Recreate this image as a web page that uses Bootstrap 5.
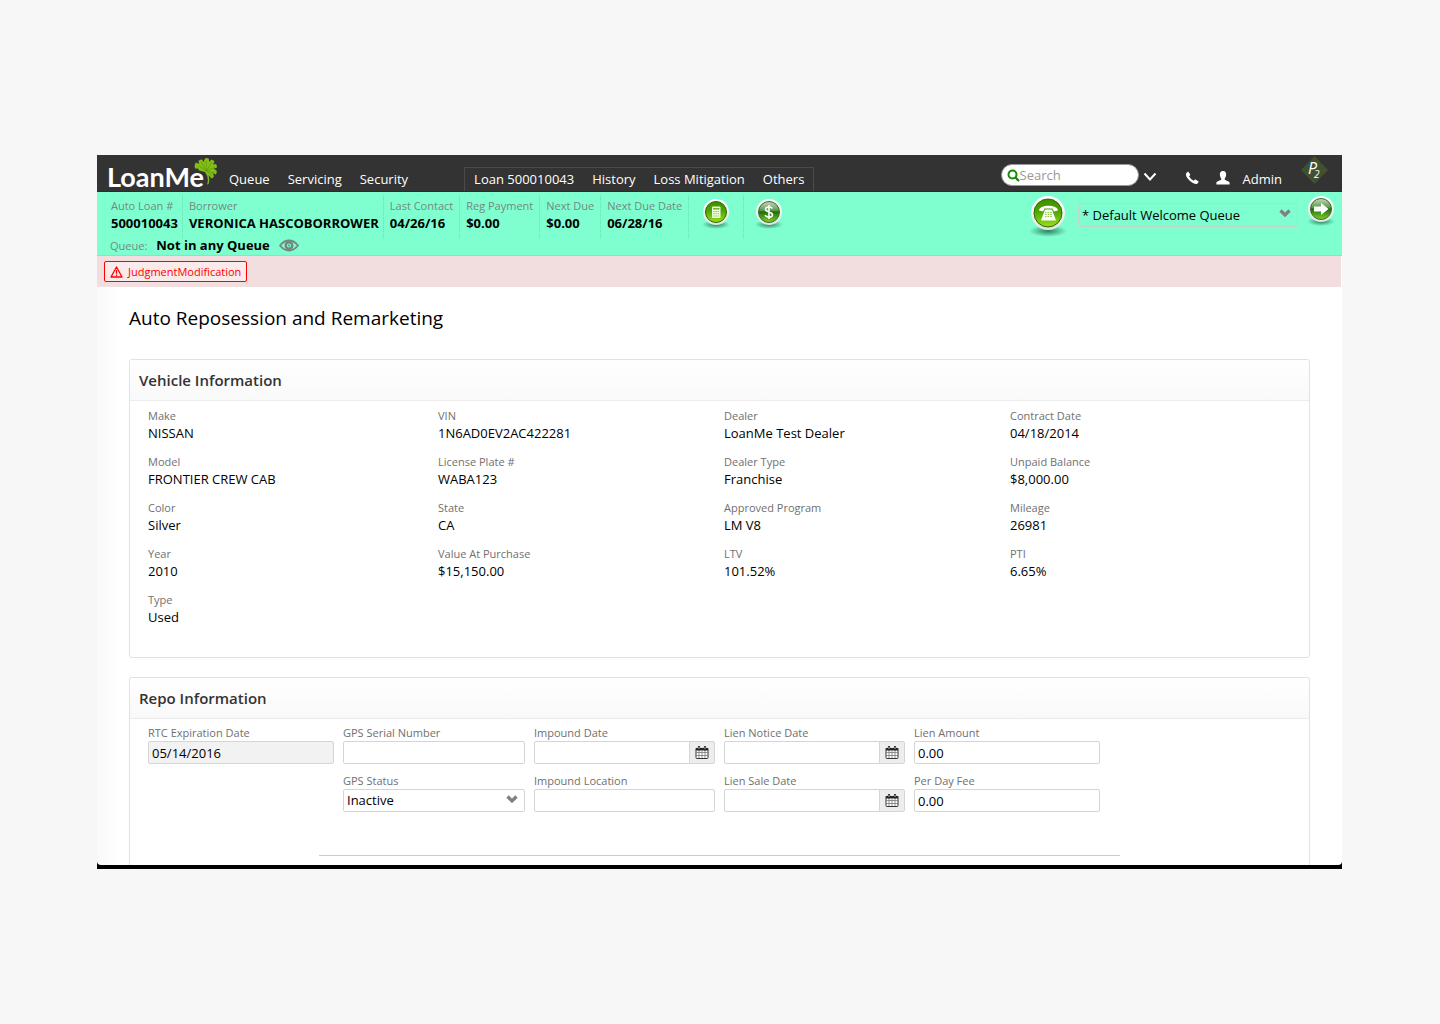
<!DOCTYPE html>
<html lang="en">
<head>
<meta charset="utf-8">
<meta name="viewport" content="width=device-width, initial-scale=1">
<title>Auto Reposession and Remarketing</title>
<link href="https://cdn.jsdelivr.net/npm/bootstrap@5.3.0/dist/css/bootstrap.min.css" rel="stylesheet">
<style>
body{background:#f7f7f7;font-family:"Open Sans",sans-serif;font-size:13px;line-height:17px;color:#000}
svg{display:block;flex-shrink:0}
.stage{padding:155px 98px 155px 97px}
.topbar{background:#333;min-height:37px;padding-left:10px;padding-right:14px;border-bottom:1px solid #2b2b2b}
.topbar a{color:#fff;text-decoration:none}
.wordmark{font-family:Lato,sans-serif;font-size:27px;font-weight:700;line-height:28px;color:#fff}
.leaf{margin-left:-10px;margin-top:3px}
.main-links{gap:18px;margin-left:11px;padding-bottom:3px}
.loan-links{gap:18px;margin-left:56px;padding:3px 9px 3px;border:1px solid #4a4a4a;border-bottom:0;height:24px}
.search-pill{background:#fff;border:1px solid #999;border-radius:11px;width:138px;height:22px;padding-left:5px;margin-top:9px}
.search-pill input{border:0;outline:0;background:none;min-width:0;padding:0;line-height:18px}
.search-pill input::placeholder{color:#999;opacity:1}
.account{margin-left:15px}
.bare{border:0;background:none;padding:0}
.summary{background:#7fffd0;min-height:64px;padding:3px 6px 0 10px;border-bottom:1px solid #74efc2}
.summary dl{margin:0}
.fact{border-right:1px dotted #6cdcb2;padding:3px 6px 0;min-height:43px;white-space:nowrap}
.fact-wide{padding-right:4px}
.fact dt,.soft-label,.field label,.spec dt{font-size:11px;font-weight:400;color:#707070;line-height:15px;display:block}
.fact dt,.spec dt{margin-bottom:2px}
.field label{margin-bottom:1px}
.fact dt,.soft-label{color:#738880}
.fact dd,.spec dd{margin:0}
.fact dd{font-weight:700}
.queue-line{gap:9px;padding-left:3px;margin-top:-1px}
.dial{margin-right:10px}
.notice{background:#f2dede;min-height:31px;padding:5px 7px;margin-right:1px}
.flag{border:1px solid #f00;border-radius:2px;color:#f00;font-size:11px;line-height:19px;padding:0 5px;gap:5px;background:#faeaea}
.flag:hover{color:#c00}
.page{background:linear-gradient(90deg,#fafafa,#fff 24px);padding:19px 32px 0;border-radius:0 0 4px 4px}
.page h1{font-size:19px;line-height:24px;font-weight:400;margin:0 0 29px}
.panel{background:#fff;border:1px solid #e2e2e2;border-radius:3px}
.panel h2{font-size:15px;line-height:20px;font-weight:600;color:#333;margin:0;padding:10px 9px;background:linear-gradient(#fff,#f9f9f9);border-bottom:1px solid #ececec;border-radius:3px 3px 0 0}
.specs{display:grid;grid-template-columns:290fr 286fr 286fr 286fr;row-gap:12px;padding:7px 13px 31px 18px;margin:0}
.panel-open{border-bottom:0;border-radius:3px 3px 0 0;margin-top:19px}
.fields{display:grid;grid-template-columns:195fr 191fr 190fr 190fr 195fr 187fr;row-gap:9px;padding:6px 13px 0 18px}
.field{padding-right:9px}
.box{height:23px;min-height:23px;font-size:13px;line-height:17px;color:#000;border:1px solid #d5d5d5;border-radius:2px;padding:2px 3px}
.box[readonly]{background:#f2f2f2}
select.box{background-image:url("data:image/svg+xml,%3Csvg xmlns='http://www.w3.org/2000/svg' viewBox='0 0 12 8'%3E%3Cpath d='M1.500 1.500L6 6 10.500 1.500' fill='none' stroke='%23808080' stroke-width='3.200'/%3E%3C/svg%3E");background-size:12px 8px;background-position:right 6px top 5px;padding-right:20px}
select.queue-select{width:220px;height:24px;border-color:#c0d6cc;background-color:transparent;margin-top:8px;padding-top:3px}
.cal{height:23px;width:26px;padding:0;border:1px solid #d5d5d5;background:#ededed;border-radius:0 2px 2px 0}
.divider{width:68%;margin:43px auto 0;border:0;border-top:1px solid #ccc;opacity:1}
.tail{height:9px}
.desk{background:#000;padding-bottom:4px}
</style>
<script src="https://cdn.jsdelivr.net/npm/bootstrap@5.3.0/dist/js/bootstrap.bundle.min.js"></script>
</head>
<body>
<svg width="0" height="0" class="position-absolute" aria-hidden="true">
<defs>
<linearGradient id="lime" x1="0" y1="0" x2="0" y2="1"><stop offset="0" stop-color="#3f8f00"/><stop offset=".45" stop-color="#4fa500"/><stop offset="1" stop-color="#9be01a"/></linearGradient>
<linearGradient id="gloss" x1="0" y1="0" x2="0" y2="1"><stop offset="0" stop-color="#c9d8c0"/><stop offset=".42" stop-color="#5c9a4c"/><stop offset=".5" stop-color="#1f6b0c"/><stop offset="1" stop-color="#7fd52a"/></linearGradient>
<linearGradient id="rim" x1="0" y1="0" x2="0" y2="1"><stop offset="0" stop-color="#fff"/><stop offset="1" stop-color="#dfe6e0"/></linearGradient>
<radialGradient id="drop"><stop offset="0" stop-color="#1c6b4c" stop-opacity=".85"/><stop offset="1" stop-color="#1c6b4c" stop-opacity="0"/></radialGradient>
<symbol id="calendar" viewBox="0 0 14 13"><path d="M1 4V11.500q0 1 1 1H12q1 0 1-1V4z" fill="#fff" stroke="#333"/><path d="M.5 4V3q0-1 1-1h11q1 0 1 1v1z" fill="#222"/><path d="M4 4v8M7 4v8M10 4v8M1 6.500h12M1 9.500h12" stroke="#777" stroke-width=".8"/><path d="M4 1.200v2M10 1.200v2" stroke="#222" stroke-width="2.400" stroke-linecap="round"/><path d="M4 1v2M10 1v2" stroke="#ddd" stroke-width=".8"/></symbol>
</defs>
</svg>
<div class="stage">
<div class="desk">
<header>
<nav class="topbar d-flex" aria-label="Main">
<a href="#" class="d-flex align-items-end" aria-label="LoanMe"><span class="wordmark">LoanMe</span>
<svg class="leaf align-self-start" width="24" height="28" viewBox="0 0 24 28"><path d="M13 26.500Q15.500 20 11 14L5 12.500 4 10.500 1 10.500Q0 6.500 2 4.500L5 6 4.500 3Q6 1 8 1.500L9.500 4 11 .5Q13-.5 15 1L15 4 17.500 1.500Q20 2 20.500 4L19 6.500 22 6Q23.500 8 22.500 10L19.500 10.500 22.500 12.500Q23.500 15 21.500 16.500L18.500 15 20 18Q19.500 20 17.500 20.500L14.500 17Q16 22 14.500 26z" fill="#83bd16"/><path d="M12.500 13L5 8M12.500 13L7 4M12.500 13L12 3M12.500 13L18 4M12.500 13L21 9M12.500 13L20.500 15M12.500 13L18 18" stroke="#5c9a10" stroke-width=".7" fill="none"/></svg></a>
<div class="main-links d-flex align-items-end"><a href="#">Queue</a><a href="#">Servicing</a><a href="#">Security</a></div>
<div class="loan-links d-flex align-self-end"><a href="#">Loan 500010043</a><a href="#">History</a><a href="#">Loss Mitigation</a><a href="#">Others</a></div>
<div class="d-flex ms-auto align-items-start">
<div class="search-pill d-flex align-items-center me-1">
<svg width="13" height="13" viewBox="0 0 13 13" fill="none" stroke="#168a00"><circle cx="5.500" cy="5.500" r="4" stroke-width="2"/><path d="M8.500 8.500L12 12" stroke-width="2.300"/></svg>
<input type="search" placeholder="Search" aria-label="Search"></div>
<button class="bare mt-3" aria-label="Search options"><svg width="14" height="12" viewBox="0 0 14 12"><path d="M1.500 2.500L7 8.500 12.500 2.500" fill="none" stroke="#fff" stroke-width="2"/></svg></button>
<a href="#" class="mt-3 ms-4" aria-label="Call"><svg class="ms-1" width="15" height="14" viewBox="0 0 15 14"><path d="M1.200 2.200Q2.500.3 3.400.7L5.200 3.500Q5.400 4 4 5.200 5.500 8 8.700 9.700 10 8.200 10.500 8.500L13.600 10.400Q14 11 12.200 12.700 9.500 13.800 5.600 10.500-.2 5.500 1.200 2.200z" fill="#fff"/></svg></a>
<a href="#" class="account mt-3" aria-label="Account"><svg width="16" height="14" viewBox="0 0 16 14"><path d="M8 0C5.500 0 4.600 1.800 4.900 4 5.100 6 6 7.300 6.400 8 6.500 9.500 2 9.800 1.400 11.500V13.500H14.600V11.500C14 9.800 9.500 9.500 9.600 8 10 7.300 10.900 6 11.100 4 11.400 1.800 10.500 0 8 0z" fill="#fff"/></svg></a>
<a href="#" class="ms-2 ps-1 pt-3">Admin</a>
<svg class="ms-3" width="30" height="30" viewBox="0 0 30 30" role="img" aria-label="P2"><path d="M16.500 1L30 15 16.500 29 3 15z" fill="#3f5130"/><text x="10" y="19" font-family="Open Sans" font-size="16" font-style="italic" fill="#fff">P<tspan dx="-3" dy="4" font-size="10">2</tspan></text></svg>
</div>
</nav>
<section class="summary d-flex" aria-label="Loan summary">
<div>
<dl class="d-flex">
<div class="fact fact-wide ps-1"><dt>Auto Loan #</dt><dd>500010043</dd></div>
<div class="fact fact-wide"><dt>Borrower</dt><dd>VERONICA HASCOBORROWER</dd></div>
<div class="fact"><dt>Last Contact</dt><dd>04/26/16</dd></div>
<div class="fact"><dt>Reg Payment</dt><dd>$0.00</dd></div>
<div class="fact"><dt>Next Due</dt><dd>$0.00</dd></div>
<div class="fact"><dt>Next Due Date</dt><dd>06/28/16</dd></div>
<div class="fact px-2"><button class="bare px-1" aria-label="Calculator"><svg width="30" height="31" viewBox="0 0 30 31"><ellipse cx="15" cy="26.500" rx="14" ry="4.500" fill="url(#drop)"/><circle cx="15" cy="14" r="13" fill="url(#rim)"/><circle cx="15" cy="14" r="10.500" fill="url(#lime)" stroke="#286a00"/><rect x="11" y="8.500" width="8.500" height="11.500" rx="1" fill="#f0ffe0"/><path d="M12 10.800h6.500" stroke="#5ba51b" stroke-width="1.300"/><path d="M12.200 13.500h6M12.200 15.700h6M12.200 18h6" stroke="#8cc45a" stroke-dasharray="1.500 .7"/></svg></button></div>
<div class="fact border-0"><button class="bare px-1" aria-label="Payment"><svg width="30" height="31" viewBox="0 0 30 31"><ellipse cx="15" cy="26.500" rx="14" ry="4.500" fill="url(#drop)"/><circle cx="15" cy="14" r="13" fill="url(#rim)"/><circle cx="15" cy="14" r="10.500" fill="url(#gloss)" stroke="#396c2b"/><path d="M18.500 10.500C17 8.200 11.500 8.500 11.500 11.300 11.500 14.500 18.500 13.300 18.500 16.700 18.500 19.800 12.500 19.800 11 17.200M15 7v14" fill="none" stroke="#fff" stroke-width="1.600"/></svg></button></div>
</dl>
<div class="queue-line d-flex align-items-center"><span class="soft-label">Queue:</span><strong>Not in any Queue</strong>
<button class="bare" aria-label="View queue"><svg width="20" height="13" viewBox="0 0 20 13"><path d="M1 6.500Q5 1.500 10 1.500T19 6.500Q15 11.500 10 11.500T1 6.500z" fill="none" stroke="#738880" stroke-width="1.800"/><circle cx="10" cy="6.500" r="3.300" fill="none" stroke="#738880" stroke-width="2.400"/><circle cx="10" cy="6.500" r="1" fill="#738880"/></svg></button></div>
</div>
<div class="d-flex ms-auto align-items-start">
<button class="bare dial" aria-label="Dial"><svg width="40" height="42" viewBox="0 0 40 42"><ellipse cx="20" cy="36" rx="19" ry="6" fill="url(#drop)"/><circle cx="20" cy="18" r="17" fill="url(#rim)"/><circle cx="20" cy="18" r="14" fill="url(#lime)" stroke="#286a00"/><path d="M11 15.500C11 9 30 9 30 15.500L26 16.500 24.500 13.500H16.500L15 16.500z" fill="#fff"/><path d="M17 14.500H24L28 25.500H13z" fill="#fff"/><path d="M17 17.500h7M17 19.500h7M17 21.500h7" fill="none" stroke="#8fc94a" stroke-dasharray="1.600 1"/></svg></button>
<select class="form-select box queue-select" aria-label="Queue"><option>* Default Welcome Queue</option></select>
<button class="bare ms-2" aria-label="Go"><svg width="30" height="31" viewBox="0 0 30 31"><ellipse cx="15" cy="26.500" rx="14" ry="4.500" fill="url(#drop)"/><circle cx="15" cy="14" r="13" fill="url(#rim)"/><circle cx="15" cy="14" r="10.500" fill="url(#gloss)" stroke="#396c2b"/><path d="M8 11.500h7V8L22.500 14 15 20V16.500H8z" fill="#fff"/></svg></button>
</div>
</section>
<div class="bg-white"><div class="notice d-flex align-items-start"><a href="#" class="flag d-flex align-items-center text-decoration-none"><svg width="13" height="12" viewBox="0 0 13 12" fill="none" stroke="#f00"><path d="M6.500 1L12 11H1z" stroke-width="1.300" stroke-linejoin="round"/><path d="M6.500 4v3.700M6.500 8.500v1.400" stroke-width="1.300"/></svg>JudgmentModification</a></div></div>
</header>
<main class="page">
<h1>Auto Reposession and Remarketing</h1>
<section class="panel">
<h2>Vehicle Information</h2>
<dl class="specs">
<div class="spec"><dt>Make</dt><dd>NISSAN</dd></div><div class="spec"><dt>VIN</dt><dd>1N6AD0EV2AC422281</dd></div><div class="spec"><dt>Dealer</dt><dd>LoanMe Test Dealer</dd></div><div class="spec"><dt>Contract Date</dt><dd>04/18/2014</dd></div>
<div class="spec"><dt>Model</dt><dd>FRONTIER CREW CAB</dd></div><div class="spec"><dt>License Plate #</dt><dd>WABA123</dd></div><div class="spec"><dt>Dealer Type</dt><dd>Franchise</dd></div><div class="spec"><dt>Unpaid Balance</dt><dd>$8,000.00</dd></div>
<div class="spec"><dt>Color</dt><dd>Silver</dd></div><div class="spec"><dt>State</dt><dd>CA</dd></div><div class="spec"><dt>Approved Program</dt><dd>LM V8</dd></div><div class="spec"><dt>Mileage</dt><dd>26981</dd></div>
<div class="spec"><dt>Year</dt><dd>2010</dd></div><div class="spec"><dt>Value At Purchase</dt><dd>$15,150.00</dd></div><div class="spec"><dt>LTV</dt><dd>101.52%</dd></div><div class="spec"><dt>PTI</dt><dd>6.65%</dd></div>
<div class="spec"><dt>Type</dt><dd>Used</dd></div>
</dl>
</section>
<section class="panel panel-open">
<h2>Repo Information</h2>
<form class="fields">
<div class="field"><label for="rtc">RTC Expiration Date</label><input id="rtc" class="form-control box" value="05/14/2016" readonly></div>
<div class="field"><label for="gps">GPS Serial Number</label><input id="gps" class="form-control box"></div>
<div class="field"><label for="imp">Impound Date</label><div class="input-group flex-nowrap"><input id="imp" class="form-control box"><button type="button" class="cal d-flex align-items-center justify-content-center" aria-label="Pick impound date"><svg width="14" height="13"><use href="#calendar"/></svg></button></div></div>
<div class="field"><label for="lnd">Lien Notice Date</label><div class="input-group flex-nowrap"><input id="lnd" class="form-control box"><button type="button" class="cal d-flex align-items-center justify-content-center" aria-label="Pick lien notice date"><svg width="14" height="13"><use href="#calendar"/></svg></button></div></div>
<div class="field"><label for="amt">Lien Amount</label><input id="amt" class="form-control box" value="0.00"></div>
<div></div><div></div>
<div class="field"><label for="sts">GPS Status</label><select id="sts" class="form-select box"><option>Inactive</option></select></div>
<div class="field"><label for="loc">Impound Location</label><input id="loc" class="form-control box"></div>
<div class="field"><label for="lsd">Lien Sale Date</label><div class="input-group flex-nowrap"><input id="lsd" class="form-control box"><button type="button" class="cal d-flex align-items-center justify-content-center" aria-label="Pick lien sale date"><svg width="14" height="13"><use href="#calendar"/></svg></button></div></div>
<div class="field"><label for="fee">Per Day Fee</label><input id="fee" class="form-control box" value="0.00"></div>
</form>
<hr class="divider">
<div class="tail"></div>
</section>
</main>
</div>
</div>
</body>
</html>
